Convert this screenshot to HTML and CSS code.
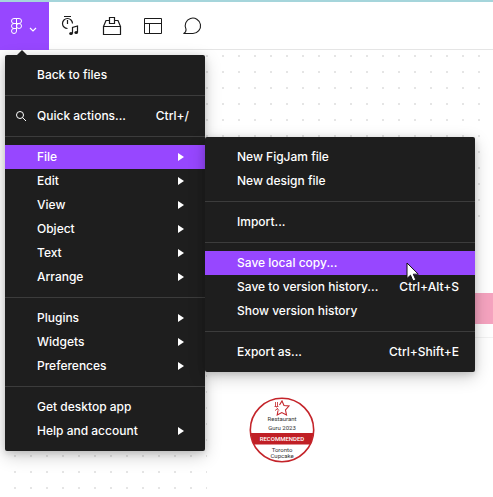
FILE: index.html
```html
<!DOCTYPE html>
<html lang="en">
<head>
<meta charset="utf-8">
<title>FigJam</title>
<link rel="stylesheet" href="styles.css">
</head>
<body>
<header class="toolbar">
  <button class="tool tool-main" aria-label="Main menu">
    <svg width="49" height="48" viewBox="0 0 49 48" fill="none" stroke="#fff">
      <path d="M16.500 16.500h-2.500a2.500 2.500 0 0 0 0 5h2.500zM16.500 16.500h2.500a2.500 2.500 0 0 1 0 5h-2.500zM16.500 21.500h-2.500a2.500 2.500 0 0 0 0 5h2.500zM16.500 26.500h-2.500a2.500 2.500 0 1 0 2.500 2.500z"/>
      <circle cx="19" cy="24" r="2.500"/>
      <path d="M30 26l3 3 3-3" stroke-width="1.200"/>
    </svg>
  </button>
  <button class="tool" aria-label="Timer and music">
    <svg width="24" height="24" viewBox="0 0 24 24" fill="none" stroke="#1a1a1a" stroke-width="1.200">
      <path d="M5 2.500h7M8.500 6v4M8.500 14.500A5 5 0 1 1 13.500 9.500"/>
      <path d="M13.500 19.500v-6l5-1.500v6.500"/>
      <ellipse cx="12" cy="19.500" rx="1.800" ry="1.500" fill="#1a1a1a" stroke="none"/>
      <ellipse cx="17.200" cy="18.500" rx="1.800" ry="1.500" fill="#1a1a1a" stroke="none"/>
    </svg>
  </button>
  <button class="tool" aria-label="Widgets">
    <svg width="24" height="24" viewBox="0 0 24 24" fill="none" stroke="#1a1a1a" stroke-width="1.200">
      <path d="M3.500 12.500h17v8h-17zM9.500 3.500h5v6h-5zM3.500 12.500l2.500-6h3.500M14.500 6.500h3.500l2.500 6"/>
    </svg>
  </button>
  <button class="tool" aria-label="Templates">
    <svg width="24" height="24" viewBox="0 0 24 24" fill="none" stroke="#1a1a1a">
      <path d="M3.500 4.500h17v15h-17zM3.500 9.500h17M8.500 9.500v10"/>
    </svg>
  </button>
  <button class="tool" aria-label="Comments">
    <svg width="24" height="24" viewBox="0 0 24 24" fill="none" stroke="#1a1a1a" stroke-width="1.100">
      <path d="M1.800 19.500c1.800-1.200 2.500-2.300 2.200-4.200A7.700 7.700 0 1 1 11 19.500z" stroke-linejoin="round"/>
    </svg>
  </button>
</header>

<main class="canvas">
  <section class="frame" aria-label="Website frame">
    <div class="banner"></div>
    <div class="page">
      <svg class="seal" width="66" height="66" viewBox="0 0 66 66" role="img" aria-label="Restaurant Guru 2023">
        <circle cx="33" cy="33" r="31.500" fill="#fff"/>
        <path d="M1.500 36h63l-2.500 11.500H4z" fill="#c01f25"/>
        <circle cx="33" cy="33" r="31.700" fill="none" stroke="#c4242a" stroke-width="1.600"/>
        <path d="M30.500 8l2.500-4 2 4.500 5 .500-3.500 4 1 5-4.700-2.500-4.600 2.500.800-4.500" fill="none" stroke="#c4242a" stroke-width="1.100"/>
        <path d="M26.500 5v4.500M28.500 5v4.500M25.500 9.500h4M27.500 10.500l2.500 3M26 13.500l3-2" fill="none" stroke="#c4242a" stroke-width=".8"/>
        <g class="seal-text">
          <text x="33" y="24">Restaurant</text>
          <text x="33" y="33">Guru 2023</text>
          <text x="33" y="44" class="seal-band">RECOMMENDED</text>
          <text x="33" y="55">Toronto</text>
          <text x="33" y="61">Cupcake</text>
        </g>
      </svg>
    </div>
  </section>

  <nav class="menu" aria-label="Main menu">
    <button class="item">Back to files</button>
    <hr>
    <button class="item">
      <svg class="search" width="12" height="12" viewBox="0 0 12 12" fill="none" stroke="#fff"><circle cx="5" cy="5" r="3.500"/><path d="M7.500 7.500l3.500 3.500"/></svg>
      Quick actions...<kbd>Ctrl+/</kbd></button>
    <hr>
    <button class="item parent active">File</button>
    <button class="item parent">Edit</button>
    <button class="item parent">View</button>
    <button class="item parent">Object</button>
    <button class="item parent">Text</button>
    <button class="item parent">Arrange</button>
    <hr>
    <button class="item parent">Plugins</button>
    <button class="item parent">Widgets</button>
    <button class="item parent">Preferences</button>
    <hr>
    <button class="item">Get desktop app</button>
    <button class="item parent">Help and account</button>
  </nav>

  <nav class="menu submenu" aria-label="File">
    <button class="item">New FigJam file</button>
    <button class="item">New design file</button>
    <hr>
    <button class="item">Import...</button>
    <hr>
    <button class="item active">Save local copy...
      <svg class="pointer" width="14" height="20" viewBox="0 0 14 20"><path d="M1 1v15.500l3.500-3.300 2.500 5.800 2.800-1.200-2.500-5.600h5z" fill="#fff" stroke="#111"/></svg>
    </button>
    <button class="item">Save to version history...<kbd>Ctrl+Alt+S</kbd></button>
    <button class="item">Show version history</button>
    <hr>
    <button class="item">Export as...<kbd>Ctrl+Shift+E</kbd></button>
  </nav>
</main>
</body>
</html>
```
FILE: styles.css
```css
* {
  box-sizing: border-box;
}

body {
  display: flex;
  flex-direction: column;
  min-height: 100vh;
  margin: 0;
  overflow: hidden;
  font-family: Inter, "Liberation Sans", sans-serif;
}

button {
  margin: 0;
  padding: 0;
  border: 0;
  background: none;
  font: inherit;
}

svg {
  display: block;
}

.toolbar {
  display: flex;
  align-items: flex-start;
  gap: 17px;
  height: 50px;
  border-top: 2px solid #a5d5db;
  border-bottom: 1px solid #e5e5e5;
  background: #fff;
}

.tool {
  padding-top: 12px;
}

.tool-main {
  height: 48px;
  margin-right: -7px;
  padding: 0;
  background: #9747ff;
}

.canvas {
  position: relative;
  display: flex;
  flex: 1;
  flex-direction: column;
  background: conic-gradient(at 2px 2px, transparent 75%, #e5e5e5 0) 14px 5px / 16px 16px #fff;
}

.frame {
  display: flex;
  flex: 1;
  flex-direction: column;
  margin: 181px 0 0 207px;
  padding-top: 62px;
  background: #fff;
}

.banner {
  height: 31px;
  background: #f5a3bf;
}

.page {
  flex: 1;
  margin-top: 13px;
  padding: 59px 42px 0;
  border-top: 1px solid #f2f2f2;
}

.seal-text {
  fill: #333;
  font: 6px Roboto, sans-serif;
  text-anchor: middle;
}

.seal-band {
  fill: #fff;
  font-weight: 500;
}

.menu {
  position: absolute;
  top: 5px;
  left: 5px;
  width: 200px;
  padding: 8px 0;
  border-radius: 2px;
  background: #1e1e1e;
  box-shadow: 0 5px 17px rgba(0, 0, 0, 0.2), 0 2px 7px rgba(0, 0, 0, 0.15);
}

.menu::before {
  content: "";
  position: absolute;
  top: -5px;
  left: 12px;
  border: solid transparent;
  border-width: 0 5px 5px;
  border-bottom-color: #1e1e1e;
}

.submenu {
  top: 87px;
  left: 205px;
  width: 270px;
}

.submenu::before {
  display: none;
}

.menu hr {
  height: 1px;
  margin: 8px 0;
  border: 0;
  background: #3c3c3c;
}

.item {
  position: relative;
  display: flex;
  align-items: center;
  justify-content: space-between;
  width: 100%;
  height: 24px;
  padding: 0 16px 0 32px;
  color: #fff;
  font-size: 12px;
  font-weight: 500;
  line-height: 24px;
  white-space: nowrap;
}

.item kbd {
  font: inherit;
}

.active {
  background: #9747ff;
}

.parent::after {
  content: "";
  margin-right: 5px;
  border: solid transparent;
  border-width: 4px 0 4px 6px;
  border-left-color: #fff;
}

.search {
  position: absolute;
  left: 10px;
}

.pointer {
  position: absolute;
  top: 11px;
  right: 55px;
  z-index: 1;
}
```
